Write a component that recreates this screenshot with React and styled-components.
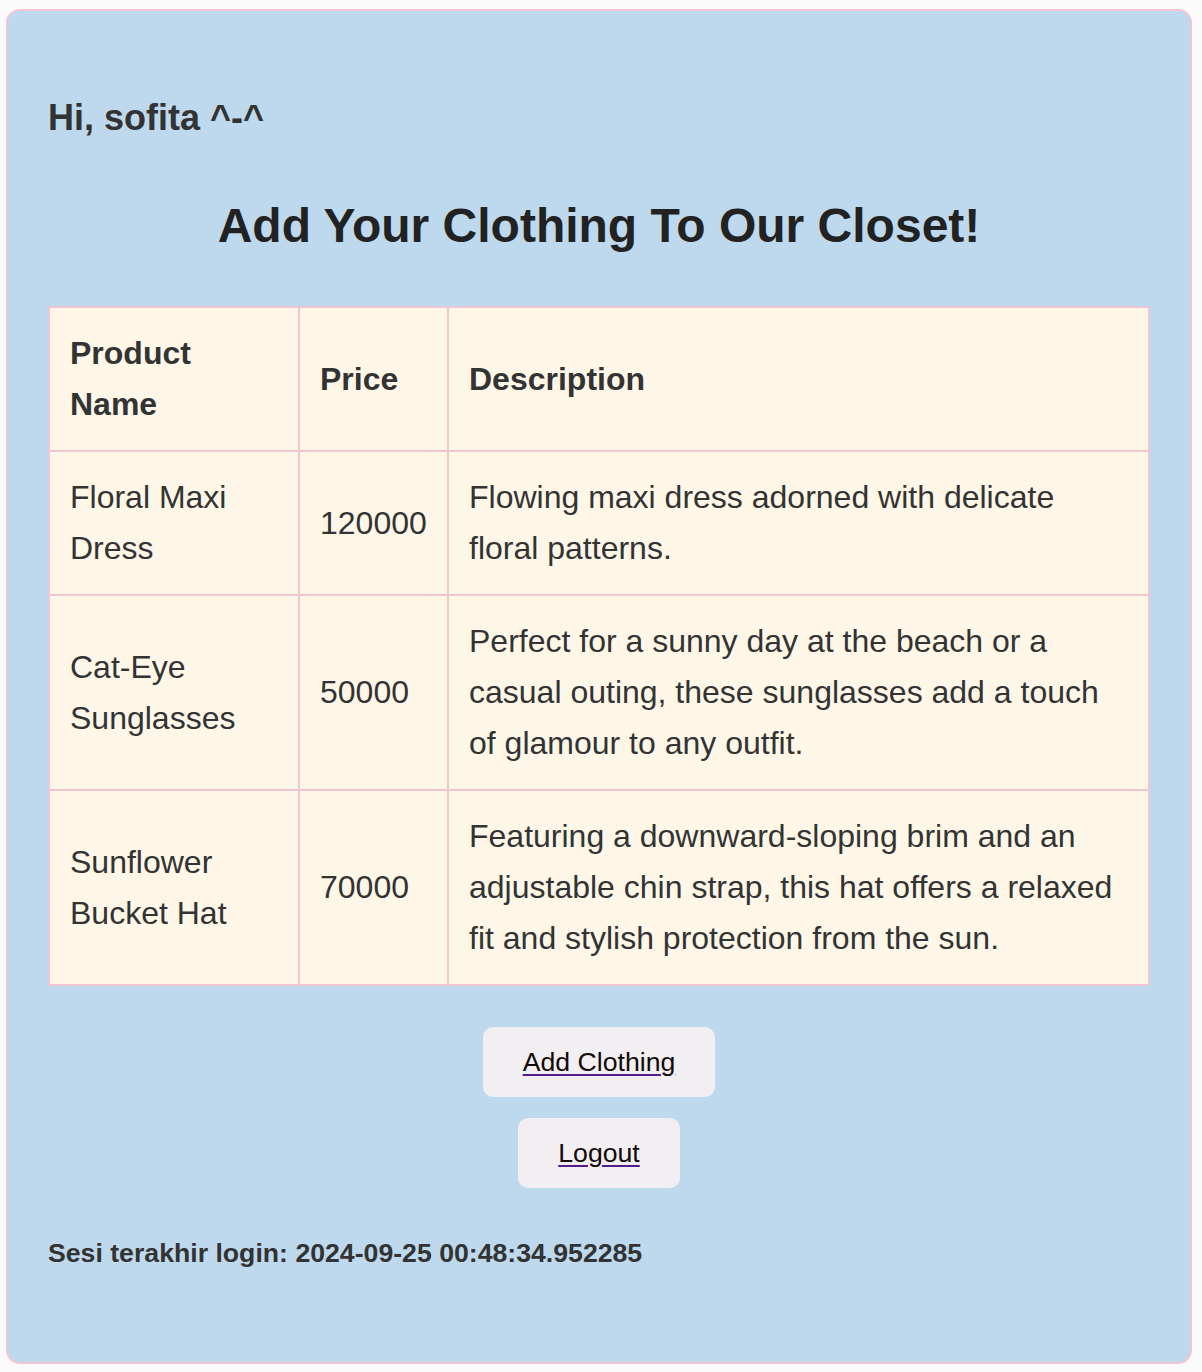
import React from 'react';
import styled, { createGlobalStyle } from 'styled-components';

const GlobalStyle = createGlobalStyle`
  html, body {
    margin: 0;
    padding: 0;
    background: #fbfbfb;
  }
  body {
    font-family: "Liberation Sans", Arial, Helvetica, sans-serif;
    color: #333;
  }
`;

const Page = styled.div`
  padding: 9px 10px 10px 6px;
`;

const Card = styled.main`
  box-sizing: border-box;
  background: #bed9ee;
  border: 2px solid #f1c6d3;
  border-radius: 14px;
  padding: 40px 40px 40px;
`;

const Greeting = styled.h2`
  margin: 46px 0 0;
  font-size: 36px;
  line-height: 41px;
  font-weight: 700;
  color: #333;
`;

const Title = styled.h1`
  margin: 60px 0 0;
  font-size: 48px;
  line-height: 55px;
  font-weight: 700;
  text-align: center;
  color: #222;
`;

const Table = styled.table`
  width: 100%;
  margin-top: 53px;
  border-collapse: collapse;
  table-layout: fixed;
  background: #fef7e8;
`;

const Cell = styled.td`
  border: 2px solid #f1c6d3;
  padding: 20px 20px;
  font-size: 32px;
  line-height: 51px;
  font-weight: ${p => (p.$head ? 700 : 400)};
  text-align: left;
  vertical-align: middle;
  color: #333;
`;

const Actions = styled.div`
  margin-top: 41px;
  display: flex;
  flex-direction: column;
  align-items: center;
  gap: 21px;
`;

const Button = styled.div`
  background: #f1eff1;
  border-radius: 10px;
  padding: 20px 40px;
  font-size: 26.67px;
  line-height: 30px;
`;

const ButtonLink = styled.a`
  font-size: 26.67px;
  color: #140a0a;
  text-decoration: underline;
  text-decoration-color: #551a8b;
  text-decoration-thickness: 2px;
  text-underline-offset: 3px;
  cursor: pointer;
`;

const Footer = styled.p`
  margin: 50px 0 53px;
  font-size: 26.67px;
  line-height: 31px;
  font-weight: 700;
  color: #333;
`;

const products = [
  {
    name: 'Floral Maxi Dress',
    price: 120000,
    description: 'Flowing maxi dress adorned with delicate floral patterns.',
  },
  {
    name: 'Cat-Eye Sunglasses',
    price: 50000,
    description:
      'Perfect for a sunny day at the beach or a casual outing, these sunglasses add a touch of glamour to any outfit.',
  },
  {
    name: 'Sunflower Bucket Hat',
    price: 70000,
    description:
      'Featuring a downward-sloping brim and an adjustable chin strap, this hat offers a relaxed fit and stylish protection from the sun.',
  },
];

const App = () => {
  return (
    <Page>
      <GlobalStyle />
      <Card>
        <Greeting>Hi, sofita ^-^</Greeting>
        <Title>Add Your Clothing To Our Closet!</Title>
        <Table>
          <colgroup>
            <col style={{ width: '250px' }} />
            <col style={{ width: '149px' }} />
            <col />
          </colgroup>
          <thead>
            <tr>
              <Cell as="th" $head>Product Name</Cell>
              <Cell as="th" $head>Price</Cell>
              <Cell as="th" $head>Description</Cell>
            </tr>
          </thead>
          <tbody>
            {products.map(item => (
              <tr key={item.name}>
                <Cell>{item.name}</Cell>
                <Cell>{item.price}</Cell>
                <Cell>{item.description}</Cell>
              </tr>
            ))}
          </tbody>
        </Table>
        <Actions>
          <Button>
            <ButtonLink href="#">Add Clothing</ButtonLink>
          </Button>
          <Button>
            <ButtonLink href="#">Logout</ButtonLink>
          </Button>
        </Actions>
        <Footer>Sesi terakhir login: 2024-09-25 00:48:34.952285</Footer>
      </Card>
    </Page>
  );
};

export default App;
